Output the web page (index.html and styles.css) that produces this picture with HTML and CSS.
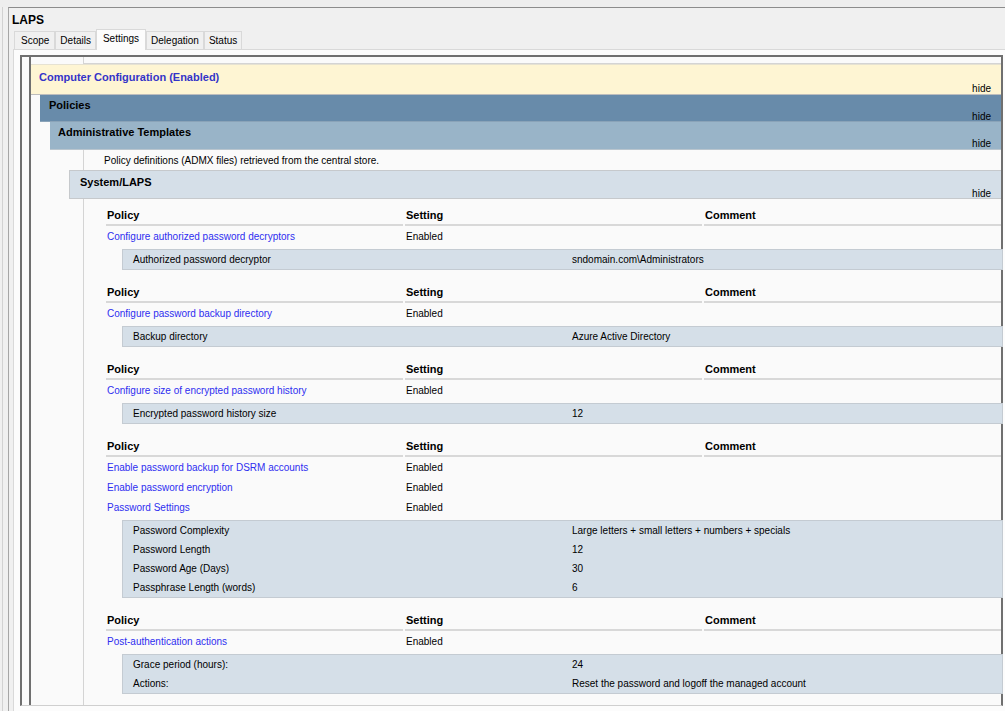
FILE: index.html
```html
<!DOCTYPE html>
<html>
<head>
<meta charset="utf-8">
<title>LAPS</title>
<link rel="stylesheet" href="styles.css">
</head>
<body>
<div class="app">
  <div class="leftstrip"><div class="leftline"></div></div>
  <div class="window">
    <div class="title">LAPS</div>
    <div class="tabs">
      <div class="tab">Scope</div>
      <div class="tab">Details</div>
      <div class="tab active">Settings</div>
      <div class="tab">Delegation</div>
      <div class="tab">Status</div>
    </div>
    <div class="tabpage">
      <div class="frame">
        <div class="inner">
          <div class="content">
            <div class="remnant"></div>
            <div class="band he0">
              <div class="btitle">Computer Configuration (Enabled)</div>
              <div class="hide">hide</div>
            </div>
            <div class="band he1">
              <div class="btitle">Policies</div>
              <div class="hide">hide</div>
            </div>
            <div class="band he2">
              <div class="btitle">Administrative Templates</div>
              <div class="hide">hide</div>
            </div>
            <div class="note">Policy definitions (ADMX files) retrieved from the central store.</div>
            <div class="band he3">
              <div class="btitle">System/LAPS</div>
              <div class="hide">hide</div>
            </div>
            <div class="details">
              <div class="sec">
                <div class="ptable">
                  <div class="th">Policy</div><div class="th">Setting</div><div class="th">Comment</div>
                  <div class="td link">Configure authorized password decryptors</div><div class="td">Enabled</div><div class="td"></div>
                </div>
                <div class="sub">
                  <div class="sl">Authorized password decryptor</div><div class="sv">sndomain.com\Administrators</div>
                </div>
              </div>
              <div class="sec">
                <div class="ptable">
                  <div class="th">Policy</div><div class="th">Setting</div><div class="th">Comment</div>
                  <div class="td link">Configure password backup directory</div><div class="td">Enabled</div><div class="td"></div>
                </div>
                <div class="sub">
                  <div class="sl">Backup directory</div><div class="sv">Azure Active Directory</div>
                </div>
              </div>
              <div class="sec">
                <div class="ptable">
                  <div class="th">Policy</div><div class="th">Setting</div><div class="th">Comment</div>
                  <div class="td link">Configure size of encrypted password history</div><div class="td">Enabled</div><div class="td"></div>
                </div>
                <div class="sub">
                  <div class="sl">Encrypted password history size</div><div class="sv">12</div>
                </div>
              </div>
              <div class="sec">
                <div class="ptable">
                  <div class="th">Policy</div><div class="th">Setting</div><div class="th">Comment</div>
                  <div class="td link">Enable password backup for DSRM accounts</div><div class="td">Enabled</div><div class="td"></div>
                  <div class="td link">Enable password encryption</div><div class="td">Enabled</div><div class="td"></div>
                  <div class="td link">Password Settings</div><div class="td">Enabled</div><div class="td"></div>
                </div>
                <div class="sub">
                  <div class="sl">Password Complexity</div><div class="sv">Large letters + small letters + numbers + specials</div>
                  <div class="sl">Password Length</div><div class="sv">12</div>
                  <div class="sl">Password Age (Days)</div><div class="sv">30</div>
                  <div class="sl">Passphrase Length (words)</div><div class="sv">6</div>
                </div>
              </div>
              <div class="sec">
                <div class="ptable">
                  <div class="th">Policy</div><div class="th">Setting</div><div class="th">Comment</div>
                  <div class="td link">Post-authentication actions</div><div class="td">Enabled</div><div class="td"></div>
                </div>
                <div class="sub">
                  <div class="sl">Grace period (hours):</div><div class="sv">24</div>
                  <div class="sl">Actions:</div><div class="sv">Reset the password and logoff the managed account</div>
                </div>
              </div>
            </div>
          </div>
        </div>
      </div>
    </div>
  </div>
</div>
</body>
</html>
```
FILE: styles.css
```css
html, body {
  margin: 0;
  padding: 0;
}
body {
  width: 1005px;
  height: 711px;
  overflow: hidden;
  background: #eeeeee;
  font-family: "Liberation Sans", Arial, sans-serif;
  font-size: 10px;
  color: #000;
}
.app {
  display: flex;
  height: 711px;
  padding-top: 7px;
  box-sizing: border-box;
}
.leftstrip {
  width: 8px;
  flex: none;
  background: #f0f0f0;
}
.leftline {
  margin-left: 2px;
  width: 1px;
  height: 100%;
  background: #d2d2d2;
}
.window {
  flex: 1;
  min-width: 0;
  display: flex;
  flex-direction: column;
  border-top: 1px solid #8c8c8c;
  border-left: 1px solid #a6a6a6;
  background: #f0f0f0;
}
.title {
  padding: 4px 0 0 3px;
  line-height: 16px;
  font-size: 12px;
  font-weight: bold;
}
.tabs {
  display: flex;
  align-items: flex-end;
  height: 21px;
  margin-left: 5px;
}
.tab {
  box-sizing: border-box;
  height: 18px;
  padding: 0 4px;
  line-height: 17px;
  border: 1px solid #d9d9d9;
  border-bottom: none;
  background: #f0f0f0;
  font-size: 10px;
}
.tab:first-child {
  padding: 0 5px 0 6px;
}
.tab.active {
  height: 21px;
  margin-bottom: -1px;
  padding: 0 6px;
  line-height: 18px;
  background: #fcfcfc;
  position: relative;
  z-index: 1;
}
.tabpage {
  flex: 1;
  min-height: 0;
  margin-left: 4px;
  border-top: 1px solid #d9d9d9;
  border-left: 1px solid #d9d9d9;
  background: #fcfcfc;
  padding: 5px 0 0 6px;
}
.frame {
  box-sizing: border-box;
  width: 983px;
  height: 651px;
  border-top: 2px solid #6f6f6f;
  border-left: 2px solid #6f6f6f;
  border-right: 2px solid #6f6f6f;
  border-bottom: 1px solid #cfcfcf;
  background: #fafafa;
}
.inner {
  height: 100%;
  margin-left: 7px;
  border-left: 2px solid #6f6f6f;
}
.content {
  height: 100%;
  display: flex;
  flex-direction: column;
}
.remnant {
  flex: none;
  margin-left: 52px;
  height: 6px;
  border-left: 1px solid #d4d4d4;
  border-bottom: 1px solid #d4d4d4;
}
.band {
  flex: none;
  padding-right: 10px;
}
.btitle {
  font-size: 11px;
  font-weight: bold;
  line-height: 13px;
}
.hide {
  text-align: right;
  font-size: 10px;
}
.he0 {
  border-top: 1px solid #e6e2d2;
  border-bottom: 1px solid #bdbdbd;
  background: #fef5d3;
  padding-top: 6px;
  padding-left: 8px;
}
.he0 .btitle {
  color: #3434c8;
}
.he0 .hide {
  line-height: 10px;
}
.he1 {
  margin-left: 9px;
  background: #688baa;
  border-bottom: 1px solid #8aa3b8;
  padding-top: 4px;
  padding-left: 9px;
}
.he1 .hide {
  line-height: 9px;
}
.he2 {
  margin-left: 19px;
  background: #99b4c8;
  border-bottom: 1px solid #b9c5ce;
  padding-top: 4px;
  padding-left: 8px;
}
.he2 .hide {
  line-height: 10px;
}
.note {
  flex: none;
  margin-left: 52px;
  border-left: 1px solid #d4d4d4;
  padding-left: 20px;
  padding-top: 1px;
  line-height: 19px;
}
.he3 {
  margin-left: 38px;
  background: #d5dfe8;
  border-top: 1px solid #c6c9cc;
  border-left: 1px solid #c6c9cc;
  border-bottom: 1px solid #c6c9cc;
  padding-top: 5px;
  padding-left: 10px;
}
.he3 .hide {
  line-height: 9px;
}
.details {
  flex: 1;
  margin-left: 52px;
  border-left: 1px solid #d4d4d4;
  padding: 7px 0 0 22px;
}
.sec + .sec {
  margin-top: 13px;
}
.ptable {
  display: grid;
  grid-template-columns: repeat(3, 1fr);
  column-gap: 2px;
}
.th {
  font-size: 11px;
  font-weight: bold;
  line-height: 14px;
  padding: 2px 1px;
  border-bottom: 2px solid #d8d8d8;
}
.td {
  padding: 1px 1px 0;
  line-height: 19px;
  white-space: nowrap;
}
.link {
  color: #2e2ef0;
}
.sub {
  margin: 3px -2px 0 16px;
  border: 1px solid #c4cbd2;
  background: #d5dfe8;
  display: grid;
  grid-template-columns: 449px 1fr;
  line-height: 19px;
  white-space: nowrap;
}
.sl {
  padding-left: 10px;
}
```
